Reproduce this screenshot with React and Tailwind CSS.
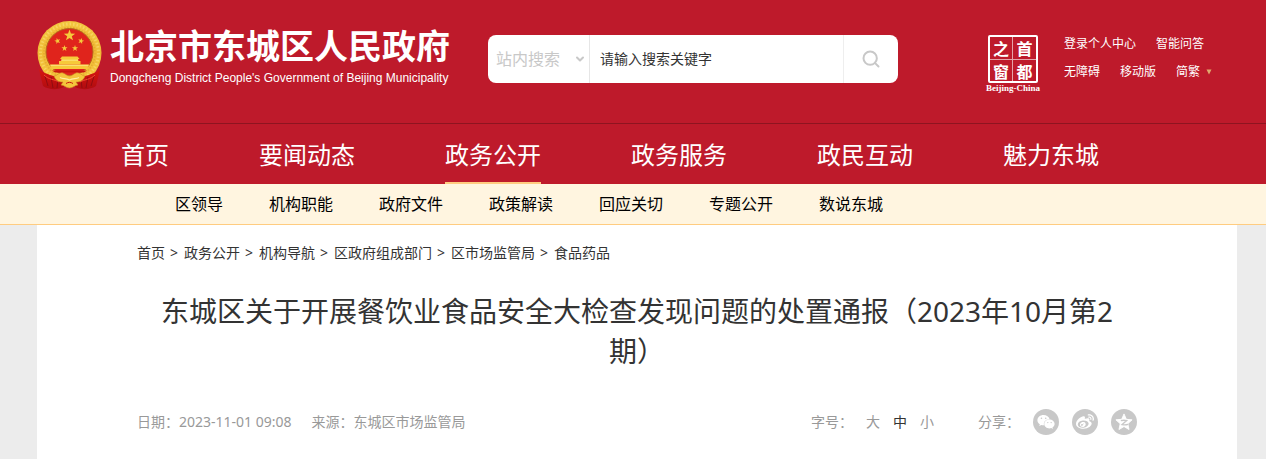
import { Search, ChevronDown } from "lucide-react";
import { FaWeixin, FaWeibo } from "react-icons/fa";

const navItems = ["首页", "要闻动态", "政务公开", "政务服务", "政民互动", "魅力东城"];

const subItems = ["区领导", "机构职能", "政府文件", "政策解读", "回应关切", "专题公开", "数说东城"];

const crumbs = ["首页", "政务公开", "机构导航", "区政府组成部门", "区市场监管局", "食品药品"];

const starPath =
  "M0 -10 L2.35 -3.24 L9.51 -3.09 L3.8 1.24 L5.88 8.09 L0 4 L-5.88 8.09 L-3.8 1.24 L-9.51 -3.09 L-2.35 -3.24 Z";

const Emblem = () => (
  <svg viewBox="0 0 66 70" className="w-[66px] h-[70px] shrink-0" aria-hidden="true">
    <defs>
      <linearGradient id="gold" x1="0" y1="0" x2="0" y2="1">
        <stop offset="0" stopColor="#f3c63f" />
        <stop offset="0.5" stopColor="#f0bb36" />
        <stop offset="1" stopColor="#f6c93f" />
      </linearGradient>
      <linearGradient id="ribbon" x1="0" y1="0" x2="0" y2="1">
        <stop offset="0" stopColor="#d8160f" />
        <stop offset="1" stopColor="#b00c10" />
      </linearGradient>
    </defs>
    {/* Wheat ring */}
    <circle cx="32.5" cy="33" r="32" fill="url(#gold)" />
    <circle cx="32.5" cy="33" r="29" fill="none" stroke="#fbe07a" strokeWidth="3" strokeDasharray="1.5 2" opacity="0.6" />
    <circle cx="32.5" cy="33" r="25.5" fill="none" stroke="#d9962a" strokeWidth="1.5" strokeDasharray="1.5 1.5" opacity="0.5" />
    <circle cx="32.5" cy="32" r="23.5" fill="#e0241c" stroke="#b5651a" strokeWidth="1" />
    {/* Stars */}
    <g fill="#f5cb3c">
      <path d={starPath} transform="translate(32.5 15.5) scale(0.6)" />
      <path d={starPath} transform="translate(20.5 21) rotate(-15) scale(0.32)" />
      <path d={starPath} transform="translate(44 21) rotate(15) scale(0.32)" />
      <path d={starPath} transform="translate(27.5 28.3) scale(0.32)" />
      <path d={starPath} transform="translate(38 28.3) scale(0.32)" />
    </g>
    {/* Gate */}
    <g fill="#f7c93a">
      <path d="M25 36.5 H40.5 L42.5 39 H41 V41 H43.5 V44.5 H22 V41 H24.5 V39 H23 Z" />
      <path d="M13 44.5 H52 L50.5 49 H14.5 Z" />
    </g>
    <path d="M24 40.2 H41.5 M13.5 45.3 H51.5" stroke="#fff0a0" strokeWidth="0.7" />
    <path d="M15 50.5 H50 L47 52.5 H18 Z" fill="#c9180f" />
    {/* Ribbon */}
    <path d="M2 49 C5 53 9 53 13 55 L29 59 L27 67 C21 70 12 70 6 66 L4 58 Z" fill="url(#ribbon)" />
    <path d="M63 49 C60 53 56 53 52 55 L36 59 L38 67 C44 70 53 70 59 66 L61 58 Z" fill="url(#ribbon)" />
    <path
      d="M8 56 L11 66 M14 57 L16 68 M21 60 L20 68 M57 56 L54 66 M51 57 L49 68 M44 60 L45 68"
      stroke="#8f0c10"
      strokeWidth="1"
      fill="none"
    />
    <path d="M7 55 C12 60 17 59 22 62 M58 55 C53 60 48 59 43 62" stroke="#ef4a32" strokeWidth="1" fill="none" />
    {/* Gear */}
    <path
      d="M17 56 C20 56 22 52 26 53 C29 54 30 56 32.5 56 C35 56 36 54 39 53 C43 52 45 56 48 56 C46 62 41 62 39 62 L41 65 C38 65 36 68 32.5 68 C29 68 27 65 24 65 L26 62 C24 62 19 62 17 56 Z"
      fill="#f4c53c"
      stroke="#cf8a22"
      strokeWidth="0.6"
    />
    <path d="M23 57.5 C26 59.5 29 57.5 32.5 60 C36 57.5 39 59.5 42 57.5" stroke="#fff0a0" strokeWidth="1.2" fill="none" />
    <path d="M29 63.5 C31 62 34 62 36 63.5" stroke="#c9180f" strokeWidth="1" fill="none" />
  </svg>
);

const CapitalWindow = () => (
  <a href="#" className="flex w-[56px] shrink-0 flex-col items-center text-white">
    <span className="grid h-12 w-[50px] grid-cols-2 rounded-xs border-2 border-white text-center font-['Noto_Sans_CJK_SC',sans-serif] text-base font-bold leading-[22px]">
      <span className="border-r border-b border-white/60">之</span>
      <span className="border-b border-white/60">首</span>
      <span className="border-r border-white/60">窗</span>
      <span>都</span>
    </span>
    <span className="font-['Liberation_Serif',serif] text-[9px] font-bold leading-[10px]">Beijing-China</span>
  </a>
);

const QzoneIcon = () => (
  <svg viewBox="0 0 20 20" className="size-[18px]" aria-hidden="true">
    <path
      d="M10 1 L12.6 7 L19 7.6 L14.2 11.9 L15.6 18.4 L10 15 L4.4 18.4 L5.8 11.9 L1 7.6 L7.4 7 Z"
      fill="#fff"
      stroke="#fff"
      strokeLinejoin="round"
    />
    <path d="M6.5 8.4 C9 7.9 11 7.9 13 8.4 L7.8 12.8 C10 13.3 12 13.3 14.5 12.6" fill="none" stroke="#c8c8c8" strokeWidth="1.5" />
  </svg>
);

const shares = [
  { name: "微信", icon: <FaWeixin className="size-[18px]" /> },
  { name: "微博", icon: <FaWeibo className="size-[18px]" /> },
  { name: "QQ空间", icon: <QzoneIcon /> },
];

const Header = () => (
  <header className="bg-[#be1a2b] text-white">
    <div className="pr-[29px] pl-[37px]">
      <div className="mx-auto flex h-[123px] max-w-[1200px] items-start">
        <a href="#" className="mt-5 flex shrink-0">
          <Emblem />
          <span className="ml-[7px] block w-[340px] whitespace-nowrap">
            <span className="mt-1 block text-[34px] font-bold leading-[44px]">北京市东城区人民政府</span>
            <span className="block font-['Liberation_Sans',sans-serif] text-xs leading-5">
              Dongcheng District People's Government of Beijing Municipality
            </span>
          </span>
        </a>

        <form className="mt-[35px] ml-[38px] flex h-12 w-[410px] overflow-hidden rounded-lg bg-white">
          <div className="relative w-[102px] shrink-0 border-r border-[#e6e6e6]">
            <select aria-label="搜索范围" className="h-full w-full appearance-none pl-2 text-base text-[#c8c8c8] outline-none">
              <option>站内搜索</option>
            </select>
            <ChevronDown className="pointer-events-none absolute top-[18px] right-[3px] size-3 text-[#c8c8c8]" strokeWidth={4} />
          </div>
          <input
            type="text"
            aria-label="搜索关键字"
            placeholder="请输入搜索关键字"
            className="min-w-0 flex-1 px-[10px] text-sm text-[#333] outline-none placeholder:text-[#333]"
          />
          <button type="button" aria-label="搜索" className="flex w-[55px] items-center justify-center border-l border-[#eee] text-[#c8c8c8]">
            <Search className="size-5" strokeWidth={2.4} />
          </button>
        </form>

        <div className="mt-[35px] ml-auto flex">
          <CapitalWindow />
          <div className="-mt-[5px] ml-[23px] w-[173px] whitespace-nowrap text-xs leading-7">
            <div className="flex gap-5">
              <a href="#">登录个人中心</a>
              <a href="#">智能问答</a>
            </div>
            <div className="flex gap-5">
              <a href="#">无障碍</a>
              <a href="#">移动版</a>
              <a href="#" className="flex items-center gap-[6px]">
                简繁
                <svg viewBox="0 0 6 6" className="size-[6px]" aria-hidden="true">
                  <path d="M0.5 0.5 H5.5 L3 5.5 Z" fill="#e0a96d" />
                </svg>
              </a>
            </div>
          </div>
        </div>
      </div>
    </div>

    <nav className="border-t border-[#8e1420] pr-[29px] pl-[37px]">
      <ul className="mx-auto flex max-w-[1200px] gap-[90px] pl-[84px] text-2xl">
        {navItems.map((item) => (
          <li key={item} className="shrink-0">
            <a
              href="#"
              className={`block h-[60px] border-b-2 leading-[62px] ${
                item === "政务公开" ? "border-[#ffcc80]" : "border-transparent"
              }`}
            >
              {item}
            </a>
          </li>
        ))}
      </ul>
    </nav>
  </header>
);

const SubNav = () => (
  <nav className="border-b border-[#ffcc80] bg-[#fff5e0] pr-[29px] pl-[37px]">
    <ul className="mx-auto flex max-w-[1200px] gap-[46px] pl-[138px] text-base leading-10 text-black">
      {subItems.map((item) => (
        <li key={item}>
          <a href="#">{item}</a>
        </li>
      ))}
    </ul>
  </nav>
);

const App = () => (
  <div className="flex min-h-screen flex-col bg-[#ececec] font-['Noto_Sans','Noto_Sans_CJK_SC',sans-serif]">
    <Header />
    <SubNav />

    <div className="flex flex-1 flex-col pr-[29px] pl-[37px]">
      <main className="mx-auto w-full max-w-[1200px] flex-1 bg-white px-[100px]">
        {/* Breadcrumb */}
        <ol className="flex gap-[5px] pt-[18px] text-sm leading-5 text-[#333]">
          {crumbs.map((crumb, i) => (
            <li key={crumb} className="flex gap-[5px]">
              {i > 0 && <span className="w-[9px]">&gt;</span>}
              <a href="#">{crumb}</a>
            </li>
          ))}
        </ol>

        <h1 className="mt-7 px-4 text-center text-[28px] leading-10 text-[#333]">
          东城区关于开展餐饮业食品安全大检查发现问题的处置通报（2023年10月第2期）
        </h1>

        {/* Meta */}
        <div className="mt-[38px] flex h-[26px] items-center text-sm text-[#999]">
          <span>日期：2023-11-01 09:08</span>
          <span className="ml-5">来源：东城区市场监管局</span>
          <div className="ml-auto flex items-center gap-[13px]">
            <span>字号：</span>
            <button type="button">大</button>
            <button type="button" className="text-[#333]">中</button>
            <button type="button">小</button>
          </div>
          <div className="ml-11 flex items-center gap-[13px]">
            <span>分享：</span>
            {shares.map((share) => (
              <a
                key={share.name}
                href="#"
                aria-label={share.name}
                className="flex size-[26px] items-center justify-center rounded-full bg-[#c8c8c8] text-white"
              >
                {share.icon}
              </a>
            ))}
          </div>
        </div>
      </main>
    </div>
  </div>
);

export default App;
